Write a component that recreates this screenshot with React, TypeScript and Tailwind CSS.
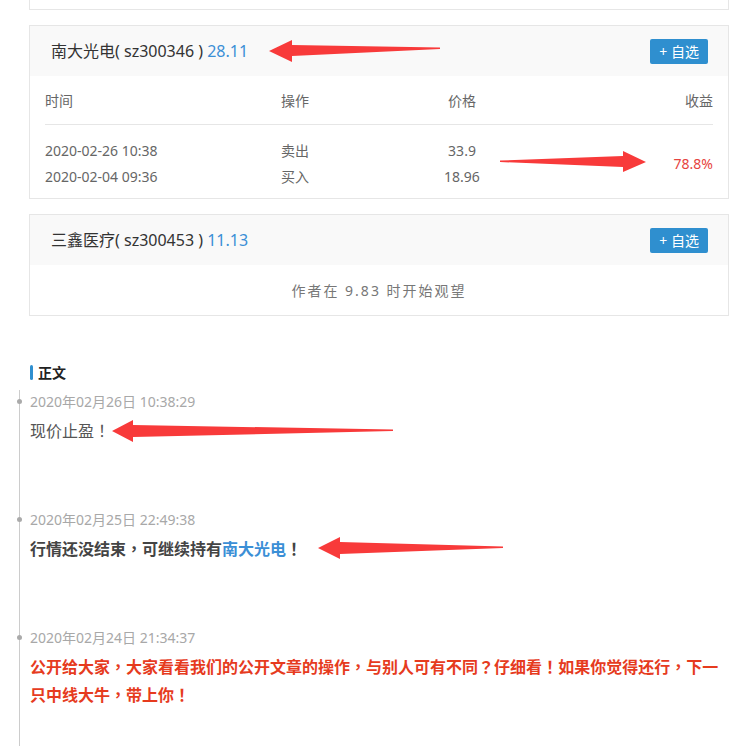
import React from 'react';

const font = "font-['Noto_Sans','Noto_Sans_CJK_SC',sans-serif]";

interface Trade {
  time: string;
  op: string;
  price: string;
}

interface StockCardProps {
  name: string;
  code: string;
  price: string;
  children: React.ReactNode;
}

// full-width punctuation sits centred in its box in the original font
function punct(text: string) {
  return text.split(/([，！？])/).map((part, i) =>
    /^[，！？]$/.test(part) ? (
      <span key={i} className="font-['Noto_Sans_CJK_TC',sans-serif]">
        {part}
      </span>
    ) : (
      part
    )
  );
}

function StockCard({ name, code, price, children }: StockCardProps) {
  return (
    <div className="mt-[15px] border border-[#e6e6e6] bg-white">
      {/* Header */}
      <div className="flex h-[50px] items-center justify-between bg-[#f9f9f9] pl-[21px] pr-[20px]">
        <div className="text-[16px] text-[#333]">
          {name}( {code} ) <span className="text-[#3b8fd6]">{price}</span>
        </div>
        <button className="flex h-[25px] items-center rounded-[2px] bg-[#2f8fcf] px-[9px] text-[14px] text-white">
          + 自选
        </button>
      </div>
      {children}
    </div>
  );
}

function TradeTable({ trades, profit }: { trades: Trade[]; profit: string }) {
  return (
    <div className="px-[15px] text-[14px] text-[#666]">
      <div className="flex h-[49px] items-center border-b border-[#e6e6e6]">
        <div className="w-[236px]">时间</div>
        <div className="w-[120px]">操作</div>
        <div className="w-[122px] text-center">价格</div>
        <div className="flex-1 text-right">收益</div>
      </div>
      <div className="flex pb-[8px] pt-[13px] leading-[26px]">
        <div className="w-[236px]">
          {trades.map((t) => (
            <div key={t.time}>{t.time}</div>
          ))}
        </div>
        <div className="w-[120px]">
          {trades.map((t) => (
            <div key={t.time}>{t.op}</div>
          ))}
        </div>
        <div className="w-[122px] text-center">
          {trades.map((t) => (
            <div key={t.time}>{t.price}</div>
          ))}
        </div>
        <div className="flex flex-1 items-center justify-end text-[#e64340]">{profit}</div>
      </div>
    </div>
  );
}

function Entry({ date, children }: { date: string; children: React.ReactNode }) {
  return (
    <div className="relative mb-[66px]">
      {/* timeline dot */}
      <span className="absolute left-[-13px] top-[7px] h-[5px] w-[5px] rounded-full bg-[#aaa]" />
      <div className="text-[14px] leading-[20px] text-[#a8a8a8]">{date}</div>
      <div className="mt-[4px] font-['Noto_Sans_CJK_SC',sans-serif] text-[16px] leading-[28px]">{children}</div>
    </div>
  );
}

// red arrows drawn over the page
const arrows = [
  '269,51 292,40 292,45 440,47.5 440,49 292,56 292,62',
  '646,162 623,151 623,156 500,160.5 500,162 623,167 623,172',
  '112,431 133,420 133,425 393,429.5 393,431 133,437 133,442',
  '318,548 340,537 340,542 503,546.5 503,548 340,554 340,559',
];

export default function App() {
  return (
    <div className={`relative h-[746px] w-[742px] overflow-hidden bg-white ${font}`}>
      <div className="ml-[29px] w-[700px]">
        <div className="h-[10px] border-x border-b border-[#e6e6e6]" />

        <StockCard name="南大光电" code="sz300346" price="28.11">
          <TradeTable
            trades={[
              { time: '2020-02-26 10:38', op: '卖出', price: '33.9' },
              { time: '2020-02-04 09:36', op: '买入', price: '18.96' },
            ]}
            profit="78.8%"
          />
        </StockCard>

        <StockCard name="三鑫医疗" code="sz300453" price="11.13">
          <div className="flex h-[50px] items-center justify-center text-[14px] tracking-[2px] text-[#777]">
            作者在 9.83 时开始观望
          </div>
        </StockCard>
      </div>

      {/* 正文 heading */}
      <div className="ml-[30px] mt-[46px] flex h-[20px] items-center gap-[5px]">
        <span className="h-[15px] w-[3px] rounded-full bg-[#2f8fcf]" />
        <span className="text-[14px] font-bold text-[#222]">正文</span>
      </div>

      {/* Timeline */}
      <div className="ml-[19px] mt-[8px] min-h-[400px] border-l border-[#ccc] pl-[10px] pt-[2px]">
        <Entry date="2020年02月26日 10:38:29">
          <span className="text-[#555]">{punct('现价止盈！')}</span>
        </Entry>
        <Entry date="2020年02月25日 22:49:38">
          <span className="font-bold text-[#444]">
            {punct('行情还没结束，可继续持有')}
            <span className="text-[#3b8fd6]">南大光电</span>
            {punct('！')}
          </span>
        </Entry>
        <Entry date="2020年02月24日 21:34:37">
          <div className="w-[700px] font-bold text-[#e63b1e]">
            <div className="whitespace-nowrap">
              {punct('公开给大家，大家看看我们的公开文章的操作，与别人可有不同？仔细看！如果你觉得还行，下一')}
            </div>
            <div className="whitespace-nowrap">{punct('只中线大牛，带上你！')}</div>
          </div>
        </Entry>
      </div>

      <svg className="pointer-events-none absolute left-0 top-0" width="742" height="746" viewBox="0 0 742 746">
        {arrows.map((p) => (
          <polygon key={p} points={p} fill="#f83a3a" />
        ))}
      </svg>
    </div>
  );
}
